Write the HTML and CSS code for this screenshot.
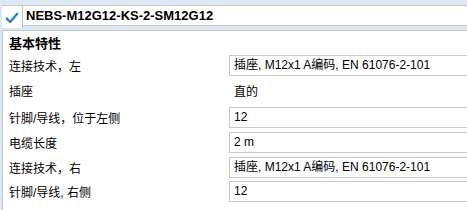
FILE: index.html
```html
<!DOCTYPE html>
<html>
<head>
<meta charset="utf-8">
<link rel="stylesheet" href="styles.css">
</head>
<body>
<div class="page">
  <div class="header">
    <div class="check">
      <svg width="14" height="12" viewBox="0 0 14 12"><path d="M1.8 6.6 L5.2 10 L12.2 1.8" fill="none" stroke="#2b7fd4" stroke-width="2.4" stroke-linecap="round" stroke-linejoin="round"/></svg>
    </div>
    <div class="title">NEBS-M12G12-KS-2-SM12G12</div>
  </div>
  <div class="panel">
    <div class="heading">基本特性</div>
    <div class="row r1"><div class="label">连接技术，左</div><div class="value box">插座, M12x1 A编码, EN 61076-2-101</div></div>
    <div class="row r2"><div class="label">插座</div><div class="value plain">直的</div></div>
    <div class="row r3"><div class="label">针脚/导线，位于左侧</div><div class="value box">12</div></div>
    <div class="row r4"><div class="label">电缆长度</div><div class="value box">2 m</div></div>
    <div class="row r5"><div class="label">连接技术，右</div><div class="value box">插座, M12x1 A编码, EN 61076-2-101</div></div>
    <div class="row r6"><div class="label">针脚/导线, 右侧</div><div class="value box">12</div></div>
  </div>
</div>
</body>
</html>
```
FILE: styles.css
```css
html, body {
  margin: 0;
  padding: 0;
  background: #dce9f5;
  font-family: "Liberation Sans", "Noto Sans CJK SC", sans-serif;
  color: #000;
}
.page {
  padding-top: 5px;
  width: 467px;
  height: 205px;
  overflow: hidden;
}
.header {
  display: flex;
  border-top: 1px solid #c4c7cb;
  border-bottom: 1px solid #c4c7cb;
  background: #fff;
  height: 19px;
  margin-left: 2px;
}
.check {
  width: 20px;
  display: flex;
  align-items: flex-end;
  justify-content: center;
  border-right: 1px solid #c4c7cb;
  height: 22px;
  background: #fff;
  position: relative;
  z-index: 1;
}
.check svg {
  margin-bottom: 4px;
}
.title {
  font-weight: bold;
  font-size: 13px;
  line-height: 19px;
  padding-left: 3px;
}
.panel {
  margin-top: 4px;
  margin-left: 2px;
  background: #fff;
  border-top: 1px solid #c4c7cb;
  border-left: 1px solid #c4c7cb;
  height: 200px;
  padding-left: 6px;
}
.heading {
  font-size: 13px;
  font-weight: bold;
  line-height: 16px;
  padding-top: 5px;
  height: 18px;
}
.row {
  display: flex;
  align-items: center;
  height: 24px;
  font-size: 12px;
}
.row.r1 { height: 22px; }
.row.r2 { height: 28px; }
.row.r3 { height: 26px; }
.row.r4 { height: 25px; }
.label {
  width: 220px;
  flex: none;
}
.value {
  flex: 1;
  font-size: 12px;
}
.box {
  border: 1px solid #c9c9c9;
  border-right: none;
  height: 19px;
  line-height: 19px;
  padding-left: 4px;
}
.plain {
  padding-left: 5px;
}
```
